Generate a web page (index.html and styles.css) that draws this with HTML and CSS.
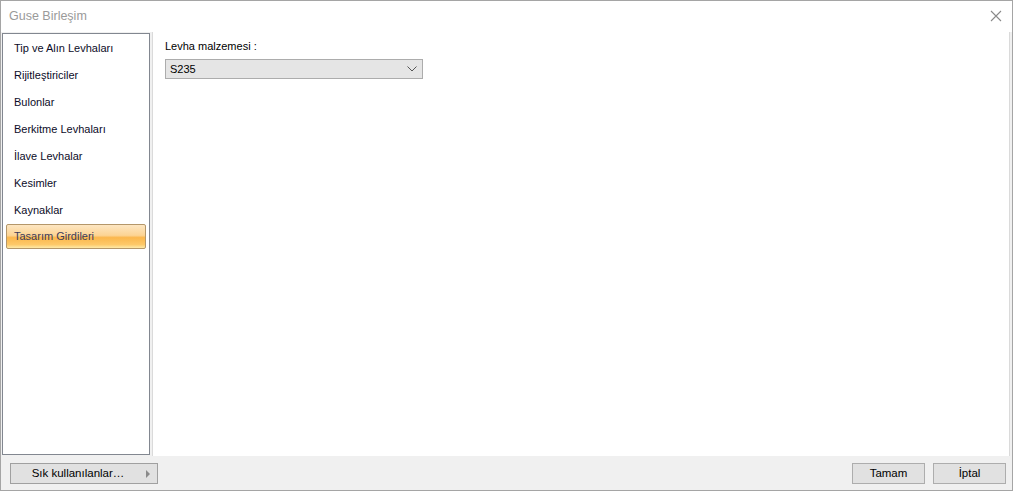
FILE: index.html
```html
<!DOCTYPE html>
<html lang="tr">
<head>
  <meta charset="UTF-8">
  <title>Guse Birleşim</title>
  <link rel="stylesheet" href="styles.css">
</head>
<body>
  <div class="window">
    <div class="titlebar">
      <span class="title">Guse Birleşim</span>
      <svg class="close" width="12" height="12" viewBox="0 0 12 12">
        <path d="M1 1 L11 11 M11 1 L1 11" stroke="#8a8a8a" stroke-width="1.1" fill="none"/>
      </svg>
    </div>

    <div class="body">
      <div class="main">
        <ul class="nav">
          <li>Tip ve Alın Levhaları</li>
          <li>Rijitleştiriciler</li>
          <li>Bulonlar</li>
          <li>Berkitme Levhaları</li>
          <li>İlave Levhalar</li>
          <li>Kesimler</li>
          <li>Kaynaklar</li>
          <li class="active">Tasarım Girdileri</li>
        </ul>

        <div class="content">
          <label class="field-label">Levha malzemesi :</label>
          <div class="combo">
            <span>S235</span>
            <svg width="10" height="6" viewBox="0 0 10 6">
              <path d="M0.5 0.5 L5 5 L9.5 0.5" stroke="#555" stroke-width="1" fill="none"/>
            </svg>
          </div>
        </div>
      </div>

      <div class="footer">
        <button class="btn fav">Sık kullanılanlar…<span class="tri"></span></button>
        <div class="actions">
          <button class="btn">Tamam</button>
          <button class="btn">İptal</button>
        </div>
      </div>
    </div>
  </div>
</body>
</html>
```

FILE: styles.css
```css
html, body {
  margin: 0;
  padding: 0;
  background-color: #ffffff;
  font-family: "Liberation Sans", Arial, sans-serif;
  font-size: 11px;
}

.window {
  width: 1013px;
  height: 491px;
  box-sizing: border-box;
  border: 1px solid #a5a5a5;
  display: flex;
  flex-direction: column;
}

.titlebar {
  height: 31px;
  background-color: #ffffff;
  display: flex;
  align-items: center;
  justify-content: space-between;
  padding: 0 10px 0 8px;
  flex-shrink: 0;
}
.title {
  color: #9a9a9a;
  font-size: 12.5px;
  margin-top: -1px;
}
.close {
  margin-top: -1px;
}

.body {
  flex: 1;
  background-color: #f0f0f0;
  display: flex;
  flex-direction: column;
  padding: 0 2px 0 1px;
}

.main {
  flex: 1;
  display: flex;
  gap: 2px;
}

.nav {
  list-style: none;
  margin: 1px 0 0 0;
  padding: 0 3px 0 3px;
  width: 148px;
  box-sizing: border-box;
  background-color: #ffffff;
  border: 1px solid #828790;
  height: 422px;
}
.nav li {
  height: 27px;
  line-height: 26px;
  padding-left: 7px;
  color: #0c0c28;
  border: 1px solid transparent;
  box-sizing: border-box;
}
.nav li.active {
  height: 25px;
  line-height: 23px;
  margin-top: 1px;
  color: #3c3c5a;
  border-color: #b4976a;
  border-radius: 2px;
  background: linear-gradient(#fde6c2 0%, #fcd494 45%, #fbb74d 55%, #fdc96a 85%, #feeaa8 100%);
}

.content {
  flex: 1;
  background-color: #ffffff;
  border-left: 1px solid #dadada;
  border-right: 1px solid #dadada;
  padding: 8px 0 0 12px;
  height: 424px;
  box-sizing: border-box;
}
.field-label {
  display: block;
  color: #000000;
  margin-bottom: 7px;
}
.combo {
  width: 258px;
  height: 20px;
  box-sizing: border-box;
  background-color: #e5e5e5;
  border: 1px solid #acacac;
  display: flex;
  align-items: center;
  justify-content: space-between;
  padding: 0 5px 0 4px;
  color: #000000;
}

.footer {
  height: 34px;
  display: flex;
  align-items: center;
  justify-content: space-between;
  padding: 0 4px 0 8px;
}
.btn {
  font-family: "Liberation Sans", Arial, sans-serif;
  font-size: 11.5px;
  height: 21px;
  width: 73px;
  background-color: #e1e1e1;
  border: 1px solid #adadad;
  color: #000000;
  padding: 0;
  margin: 0;
}
.btn.fav {
  width: 148px;
  border-color: #a0a0a0;
  position: relative;
  padding-right: 12px;
}
.tri {
  position: absolute;
  right: 7px;
  top: 6px;
  width: 0;
  height: 0;
  border-top: 4px solid transparent;
  border-bottom: 4px solid transparent;
  border-left: 4px solid #8a8a8a;
}
.actions {
  display: flex;
  gap: 8px;
}
```
